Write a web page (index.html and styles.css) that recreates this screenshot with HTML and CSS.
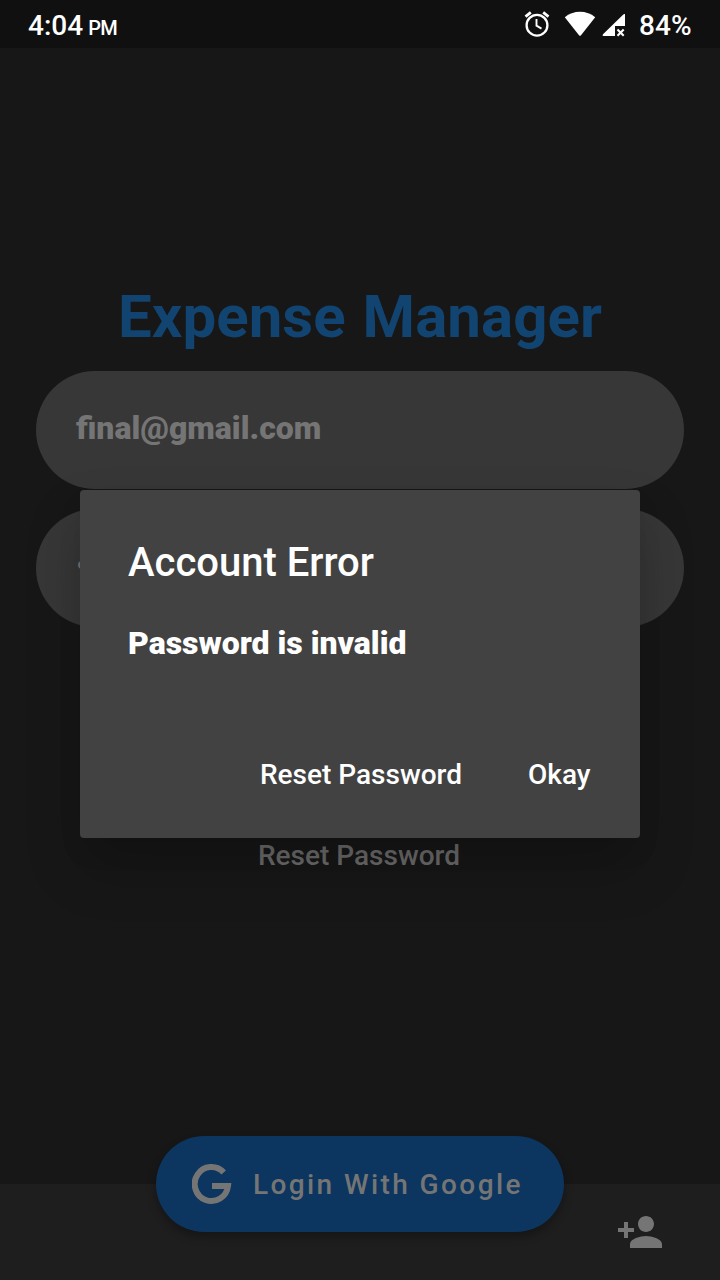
FILE: index.html
```html
<!DOCTYPE html>
<html lang="en">
<head>
<meta charset="utf-8">
<title>Expense Manager</title>
<link rel="stylesheet" href="styles.css">
</head>
<body>
<div class="screen">
  <header class="status-bar">
    <div class="clock">4:04<span class="meridiem">PM</span></div>
    <div class="indicators">
      <svg class="alarm" width="28" height="28" viewBox="0 0 28 28" fill="none" stroke="#fff">
        <circle cx="14" cy="15.2" r="10.4" stroke-width="2.3"/>
        <path d="M13.500 9v6.600l5 3" stroke-width="1.9"/>
        <path d="M2.500 6.600 7.800 2.400M25.500 6.600 20.200 2.400" stroke-width="2.8"/>
      </svg>
      <svg class="wifi" width="32" height="26" viewBox="0 0 32 26" fill="#fff">
        <path d="M.8 6.200C5 2.600 10.300.7 16 .7s11 1.900 15.200 5.500L17 24.200q-1 1-2 0z"/>
      </svg>
      <svg class="signal" width="24" height="24" viewBox="0 0 24 24" fill="#fff">
        <path d="M24 1v12H14v10H2.500q-1.800-.3-.5-1.700L22.300 1.500Q23.400.6 24 1z"/>
        <path d="m16.500 16.500 6.200 6.200m0-6.200-6.200 6.200" fill="none" stroke="#fff" stroke-width="2.1"/>
      </svg>
      <span class="battery">84%</span>
    </div>
  </header>

  <main class="login">
    <h1 class="app-title">Expense Manager</h1>
    <div class="field">final@gmail.com</div>
    <div class="field password">••</div>
    <div class="reset-link">Reset Password</div>
  </main>

  <footer class="bottom-bar">
    <div class="google-login">
      <svg width="40" height="42" viewBox="0 0 40 42" fill="none" stroke="#757575" stroke-width="6">
        <path d="M31.700 9.500A16.700 17 0 1 0 36 23H20"/>
      </svg>
      <span class="google-label">Login With Google</span>
    </div>
    <svg class="add-person" width="48" height="48" viewBox="0 0 24 24" fill="#757575">
      <path d="M15 12c2.210 0 4-1.790 4-4s-1.790-4-4-4-4 1.790-4 4 1.790 4 4 4zm-9-2V7H4v3H1v2h3v3h2v-3h3v-2H6zm9 4c-2.670 0-8 1.340-8 4v2h16v-2c0-2.660-5.330-4-8-4z"/>
    </svg>
  </footer>

  <div class="overlay">
    <section class="dialog" role="dialog">
      <h2 class="dialog-title">Account Error</h2>
      <p class="dialog-text">Password is invalid</p>
      <div class="dialog-actions">
        <span class="action">Reset Password</span>
        <span class="action okay">Okay</span>
      </div>
    </section>
  </div>
</div>
</body>
</html>
```

FILE: styles.css
```css
* { box-sizing: border-box; }
body { margin: 0; background: #171717; font-family: Roboto, sans-serif; }
h1, h2, p { margin: 0; }
svg { display: block; flex: none; }

.screen {
  position: relative;
  display: flex;
  flex-direction: column;
  width: 720px;
  height: 1280px;
  overflow: hidden;
  background: #171717;
}

.status-bar {
  display: flex;
  justify-content: space-between;
  height: 48px;
  padding: 0 28.5px 0 28px;
  background: #101010;
  color: #fff;
  font-size: 28px;
  font-weight: 500;
  line-height: 52px;
}
.meridiem { margin-left: 5px; font-size: 20px; letter-spacing: -.6px; }
.indicators { display: flex; }
.alarm { margin: 10px 13px 0 0; }
.wifi { margin: 11px 5px 0 0; }
.signal { margin: 13px 14.5px 0 0; }

.login {
  display: flex;
  flex: 1;
  flex-direction: column;
  padding: 234px 36px 0;
}
.app-title {
  height: 89px;
  color: #114470;
  font-size: 60px;
  font-weight: 700;
  word-spacing: 2px;
  letter-spacing: .05px;
  line-height: 70px;
  text-align: center;
  white-space: nowrap;
}
.field {
  height: 118px;
  margin-bottom: 20px;
  padding: 0 40px;
  border-radius: 59px;
  background: #373737;
  color: #757575;
  font-size: 32px;
  font-weight: 900;
  line-height: 115px;
}
.reset-link {
  margin-top: 192px;
  padding-right: 2px;
  color: #6b6b6b;
  font-size: 28px;
  font-weight: 500;
  line-height: 34px;
  text-align: center;
}

.bottom-bar {
  position: relative;
  display: flex;
  justify-content: flex-end;
  align-items: center;
  height: 96px;
  padding-right: 56px;
  background: #1e1e1e;
}
.google-login {
  position: absolute;
  left: 156px;
  top: -48px;
  display: flex;
  align-items: center;
  gap: 21px;
  width: 408px;
  height: 96px;
  padding-left: 36px;
  border-radius: 48px;
  background: #0c365f;
  box-shadow: 0 5px 10px rgba(0, 0, 0, .3);
}
.google-label {
  color: #757575;
  font-size: 28px;
  font-weight: 500;
  letter-spacing: 2.4px;
  white-space: nowrap;
}

.overlay {
  position: absolute;
  inset: 48px 0 0;
  display: flex;
  align-items: center;
  justify-content: center;
}
.dialog {
  width: 560px;
  height: 348px;
  padding: 49px 49px 47px 48px;
  border-radius: 4px;
  background: #424242;
  box-shadow: 0 30px 56px rgba(0, 0, 0, .2), 0 14px 26px rgba(0, 0, 0, .06);
  color: #fff;
}
.dialog-title { font-size: 40px; font-weight: 500; line-height: 48px; }
.dialog-text { margin-top: 37px; font-size: 32px; font-weight: 900; line-height: 38px; }
.dialog-actions {
  display: flex;
  justify-content: flex-end;
  gap: 66px;
  margin-top: 96px;
  padding-right: .5px;
  font-size: 28px;
  font-weight: 500;
  line-height: 34px;
}
```
